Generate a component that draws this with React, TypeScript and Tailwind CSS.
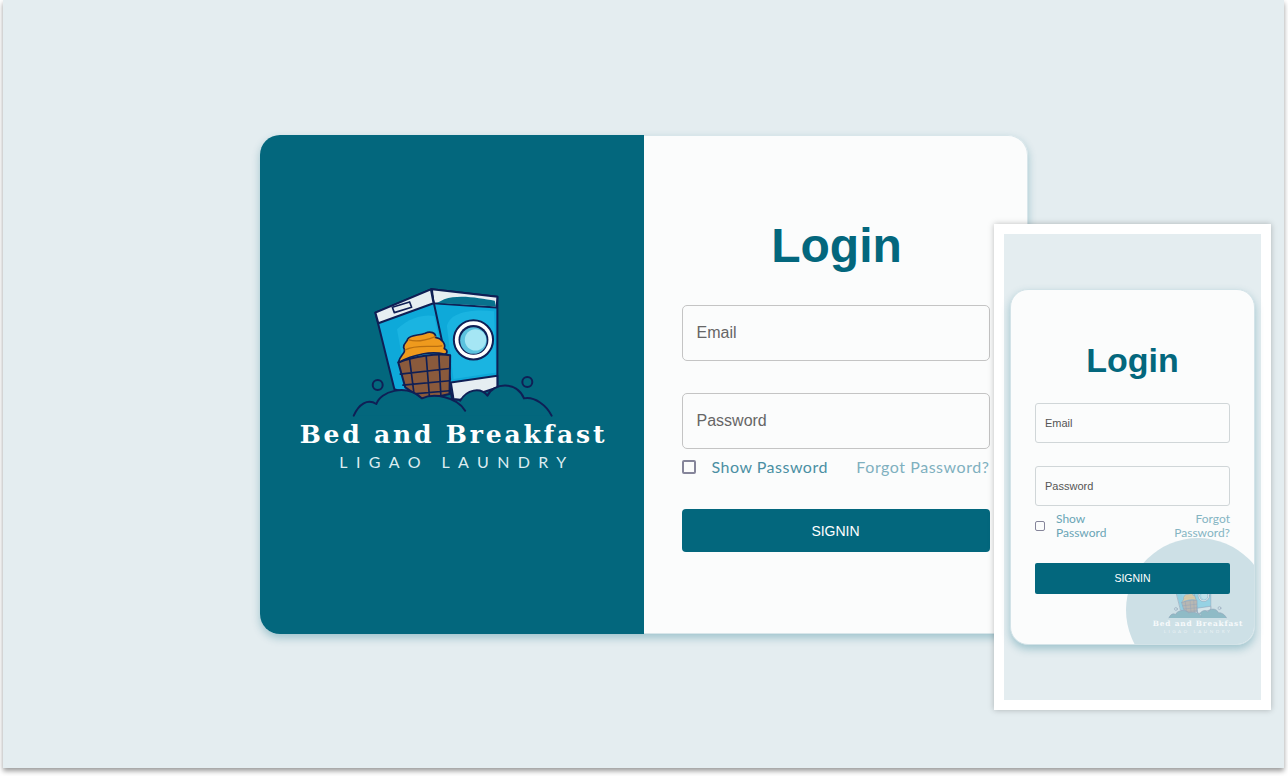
function LogoArt({ className }: { className: string }) {
  return (
    <svg viewBox="180 20 620 400" className={className} fill="none" stroke="#0f1f55" strokeWidth="6" strokeLinejoin="round" strokeLinecap="round">
      {/* right washer */}
      <path d="M425 30 L622 52 L622 325 L510 362 L486 360 L428 75 Z" fill="#0ea9d9" />
      <path d="M425 30 L622 52 L620 85 L430 72 Z" fill="#e6eef2" />
      <path d="M462 60 C510 44 570 58 614 64 L618 82 L440 71 Z" fill="#08718d" stroke="none" />
      <path d="M482 310 L622 290 L622 325 L510 362 L490 360 Z" fill="#e6eef2" />
      <path d="M470 140 C480 100 540 88 612 96 L618 280 L490 300 Z" fill="#1ab4e1" stroke="none" />
      <circle cx="550" cy="182" r="59" fill="#fff" />
      <circle cx="550" cy="182" r="45" fill="#0f1f55" stroke="none" />
      <circle cx="550" cy="184" r="40" fill="#5cc3df" stroke="none" />
      <circle cx="556" cy="182" r="32" fill="#a5e6f4" stroke="none" />
      {/* left washer */}
      <path d="M255 100 L422 30 L480 300 L400 360 L312 330 Z" fill="#0ea9d9" />
      <path d="M255 100 L422 30 L430 72 L264 132 Z" fill="#e6eef2" />
      <path d="M320 150 C360 110 410 105 432 110 L460 240 L340 260 Z" fill="#1ab4e1" stroke="none" />
      <path d="M306 84 L358 68 L364 84 L312 100 Z" fill="#e6eef2" strokeWidth="5" />
      {/* basket */}
      <path d="M324 250 C370 232 440 222 480 228 L478 345 L400 362 L345 325 Z" fill="#8a5a3c" />
      <path d="M330 285 L478 268 M338 318 L478 305 M362 345 L478 335 M358 240 L372 350 M408 232 L418 358 M446 228 L452 350" strokeWidth="5" />
      <path d="M324 250 C330 225 350 222 340 205 C340 190 350 190 352 180 C360 165 385 170 405 162 C420 155 438 160 436 175 C455 178 468 195 462 208 C476 215 470 225 462 225 C425 215 370 225 324 250 Z" fill="#ef9a1d" strokeWidth="5" />
      <path d="M345 212 C375 195 420 205 455 200 M356 182 C380 190 410 182 435 172" stroke="#b96f10" strokeWidth="4" />
      {/* suds */}
      <path d="M190 410 C205 375 232 358 258 375 C270 338 345 312 392 358 C430 342 500 352 525 395 L510 365 C530 332 570 322 592 350 C610 310 680 305 702 358 C735 352 770 380 785 410 Z" fill="#03677d" stroke="none" />
      <path d="M190 410 C205 375 232 358 258 375 C270 338 345 312 395 358 C430 342 500 352 525 395 M510 365 C530 332 570 322 592 350 C610 310 680 305 702 358 C735 352 770 380 785 410" />
      <circle cx="262" cy="318" r="15" />
      <circle cx="712" cy="309" r="15" />
    </svg>
  );
}

export default function App() {
  return (
    <div className="w-[1288px] h-[776px] bg-white overflow-hidden font-['Liberation_Sans',sans-serif]">
      <div className="relative ml-[3px] w-[1281px] h-[768px] bg-[#e4edf0] shadow-[0_3px_5px_rgba(0,0,0,0.4)] flex items-center justify-center">
        {/* desktop card */}
        <div className="flex w-[768px] h-[499px] rounded-[20px] overflow-hidden shadow-[0_4px_8px_rgba(3,103,125,0.3)]">
          <div className="w-[384px] bg-[#03677d] flex flex-col items-center justify-center pb-3">
            <LogoArt className="ml-[4px] w-[207px] h-[133px]" />
            <div className="ml-[4px] text-white font-['DejaVu_Serif',serif] font-bold text-[25px] leading-[31px] tracking-[2.8px] whitespace-nowrap">
              Bed and Breakfast
            </div>
            <div className="ml-[11px] mt-[4px] text-[#dcecf0] font-['Lato',sans-serif] text-[16px] leading-[16px] tracking-[8.4px] whitespace-nowrap">
              LIGAO LAUNDRY
            </div>
          </div>
          <div className="flex-1 bg-[#fbfcfc] border border-l-0 border-[#d8e6ea] rounded-r-[20px] pl-[38px] pr-[37px] pt-[86px]">
            <h1 className="pl-[2px] text-[48px] leading-[48px] font-bold text-[#03677d] text-center">Login</h1>
            <input placeholder="Email" className="mt-[35px] block w-full h-[56px] px-[14px] rounded-[5px] border border-[#c4c4c4] text-[16px] bg-transparent placeholder:text-[#666]" />
            <input placeholder="Password" className="mt-[32px] block w-full h-[56px] px-[14px] rounded-[5px] border border-[#c4c4c4] text-[16px] bg-transparent placeholder:text-[#666]" />
            <div className="mt-[8px] h-[20px] flex items-center font-['Lato',sans-serif] text-[16px]">
              <span className="w-[14px] h-[14px] rounded-[2px] border-2 border-[#85859a]" />
              <span className="ml-[16px] text-[#4a8fa3] tracking-[0.5px]">Show Password</span>
              <span className="ml-auto text-[#7fb0bf] tracking-[0.55px]">Forgot Password?</span>
            </div>
            <button className="mt-[32px] w-full h-[43px] pt-[2px] rounded-[4px] bg-[#03677d] text-white text-[14px]">SIGNIN</button>
          </div>
        </div>

        {/* phone preview */}
        <div className="absolute left-[991px] top-[224px] w-[277px] h-[486px] border-[10px] border-white shadow-[0_0_6px_rgba(0,0,0,0.25)] bg-[#e4edf0] flex items-center justify-center">
          <div className="relative w-[245px] h-[356px] rounded-[18px] overflow-hidden bg-[#fbfcfc] border border-[#d3e3e8] shadow-[0_4px_8px_rgba(3,103,125,0.3)] px-[24px] pt-[53px]">
            <div className="absolute left-[115px] top-[248px] w-[144px] h-[144px] rounded-full bg-[#cde0e6]" />
            <div className="absolute left-[115px] top-[290px] w-[144px] flex flex-col items-center">
              <LogoArt className="w-[60px] h-[39px] opacity-30" />
              <div className="text-white/85 font-['DejaVu_Serif',serif] font-bold text-[7.3px] leading-[9px] tracking-[0.85px] whitespace-nowrap">Bed and Breakfast</div>
              <div className="text-white/60 font-['Lato',sans-serif] text-[4.6px] leading-[7px] tracking-[2.5px] whitespace-nowrap">LIGAO LAUNDRY</div>
            </div>
            <div className="relative">
              <h2 className="text-[34px] leading-[34px] font-bold text-[#03677d] text-center">Login</h2>
              <input placeholder="Email" className="mt-[26px] block w-full h-[40px] px-[9px] rounded-[3px] border border-[#d0d6d8] text-[11px] bg-transparent placeholder:text-[#555]" />
              <input placeholder="Password" className="mt-[23px] block w-full h-[40px] px-[9px] rounded-[3px] border border-[#d0d6d8] text-[11px] bg-transparent placeholder:text-[#555]" />
              <div className="mt-[6px] h-[28px] flex items-center font-['Lato',sans-serif] text-[12px] leading-[14px]">
                <span className="w-[10px] h-[10px] rounded-[2px] border-[1.5px] border-[#85859a]" />
                <span className="ml-[11px] w-[60px] text-[#6aa5b6]">Show Password</span>
                <span className="ml-auto w-[62px] text-right text-[#85b5c3]">Forgot Password?</span>
              </div>
              <button className="mt-[23px] w-full h-[31px] rounded-[2px] bg-[#03677d] text-white text-[10.5px]">SIGNIN</button>
            </div>
          </div>
        </div>
      </div>
    </div>
  );
}
